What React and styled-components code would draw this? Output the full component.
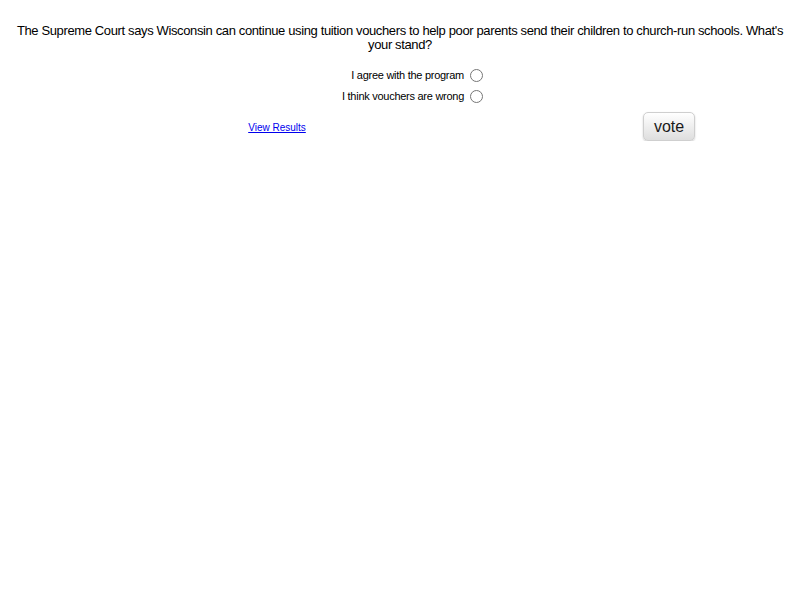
import React from 'react';
import styled, { createGlobalStyle } from 'styled-components';

const GlobalStyle = createGlobalStyle`
  body {
    margin: 8px;
    background: #ffffff;
    font-family: "Liberation Sans", Arial, sans-serif;
    color: #000000;
  }
`;

const options = ['I agree with the program', 'I think vouchers are wrong'];

function App() {
  return (
    <>
      <GlobalStyle />
      <Poll>
        <Question>
          The Supreme Court says Wisconsin can continue using tuition vouchers to help poor parents send their children to church-run schools. What's your stand?
        </Question>
        <Options>
          {options.map((label, index) => (
            <OptionRow key={index}>
              <OptionLabel htmlFor={`opt${index}`}>{label}</OptionLabel>
              <Radio type="radio" name="poll" id={`opt${index}`} />
            </OptionRow>
          ))}
        </Options>
        <Footer>
          <FooterCell>
            <ResultsLink href="#">View Results</ResultsLink>
          </FooterCell>
          <FooterCell>
            <VoteButton>vote</VoteButton>
          </FooterCell>
        </Footer>
      </Poll>
    </>
  );
}

const Poll = styled.div`
  width: 784px;
  padding-top: 16px;
`;

const Question = styled.div`
  font-size: 13px;
  line-height: 14px;
  text-align: center;
  letter-spacing: -0.37px;
`;

const Options = styled.div`
  margin-top: 16px;
  display: flex;
  flex-direction: column;
  gap: 7px;
`;

const OptionRow = styled.div`
  display: grid;
  grid-template-columns: 456px auto;
  align-items: center;
  height: 14px;
`;

const OptionLabel = styled.label`
  font-size: 11px;
  text-align: right;
  letter-spacing: -0.27px;
`;

const Radio = styled.input`
  width: 13px;
  height: 13px;
  margin: 0 0 0 6px;
`;

const Footer = styled.div`
  display: grid;
  grid-template-columns: 538px 246px;
  align-items: center;
  margin-top: 9px;
`;

const FooterCell = styled.div`
  display: flex;
  justify-content: center;
`;

const ResultsLink = styled.a`
  font-size: 10px;
  padding-top: 2px;
  color: #0000ee;
  text-decoration: underline;
`;

const VoteButton = styled.button`
  width: 52px;
  height: 29px;
  padding: 0;
  font-family: "Liberation Sans", Arial, sans-serif;
  font-size: 16px;
  color: #1a1a1a;
  border: 1px solid #cfcfcf;
  border-radius: 5px;
  background: linear-gradient(#ffffff, #dedede);
  box-shadow: 0 1px 2px rgba(0, 0, 0, 0.2);
`;

export default App;
